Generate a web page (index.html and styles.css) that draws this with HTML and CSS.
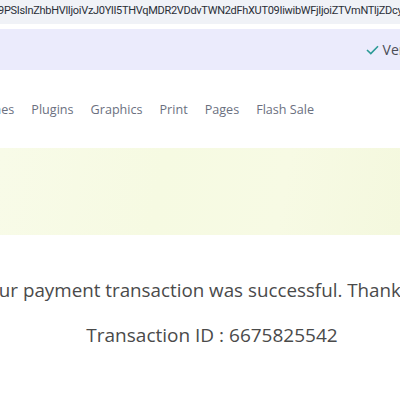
FILE: index.html
```html
<!DOCTYPE html>
<html>
  <head>
    <title>Payment Success</title>
    <meta charset="UTF-8">
    <link rel="stylesheet" href="styles.css">
  </head>
  <body>
    <div class="urlbar">9PSIsInZhbHVlIjoiVzJ0YlI5THVqMDR2VDdvTWN2dFhXUT09IiwibWFjIjoiZTVmNTljZDcyYjQ1</div>
    <div class="secure">
      <span class="verified">
        <svg width="13" height="10" viewBox="0 0 13 10"><path d="M1 5 L4.8 8.6 L12 1.2" fill="none" stroke="#2b9a96" stroke-width="1.6"/></svg>
        Verified Store
      </span>
    </div>
    <nav class="menu">
      <span>Home</span>
      <span>Templates</span>
      <span>Themes</span>
      <span>Plugins</span>
      <span>Graphics</span>
      <span>Print</span>
      <span>Pages</span>
      <span>Flash Sale</span>
    </nav>
    <div class="banner"></div>
    <div class="result">
      <p class="msg">Your payment transaction was successful. Thank you.</p>
      <p class="txid">Transaction ID : 6675825542</p>
    </div>
  </body>
</html>
```

FILE: styles.css
```css
html {
  background: white;
}
body {
  margin: 0;
  width: 400px;
  overflow: hidden;
  font-family: "Open Sans", "Noto Sans", sans-serif;
}
.urlbar {
  height: 24px;
  line-height: 21px;
  background: #f0f2f7;
  color: #2b2f38;
  font-family: Roboto, "Noto Sans", sans-serif;
  font-size: 11px;
  white-space: nowrap;
  overflow: hidden;
  text-indent: -2px;
  letter-spacing: -0.3px;
}
.secure {
  margin-top: 5px;
  height: 41px;
  background: #ebebfc;
  display: flex;
  align-items: center;
  justify-content: flex-end;
  overflow: hidden;
}
.verified {
  display: flex;
  align-items: center;
  gap: 4px;
  margin-right: -71px;
  font-size: 14px;
  color: #4a4d57;
  white-space: nowrap;
}
.menu {
  height: 78px;
  display: flex;
  align-items: center;
  justify-content: flex-end;
  gap: 17px;
  padding-right: 86px;
  overflow: hidden;
  font-size: 12.6px;
  color: #6b7080;
  white-space: nowrap;
}
.banner {
  height: 87px;
  background: linear-gradient(100deg, #f8fbe8 0%, #f6fae2 40%, #f7fae4 70%, #f4f8de 100%);
}
.result {
  display: flex;
  flex-direction: column;
  align-items: center;
  width: 420px;
  color: #4a4a4a;
}
.result p {
  margin: 0;
  white-space: nowrap;
  font-size: 19px;
}
.msg {
  margin-top: 42px !important;
  font-size: 18.8px !important;
}
.txid {
  margin-top: 19px !important;
  transform: translateX(2px);
}
```
